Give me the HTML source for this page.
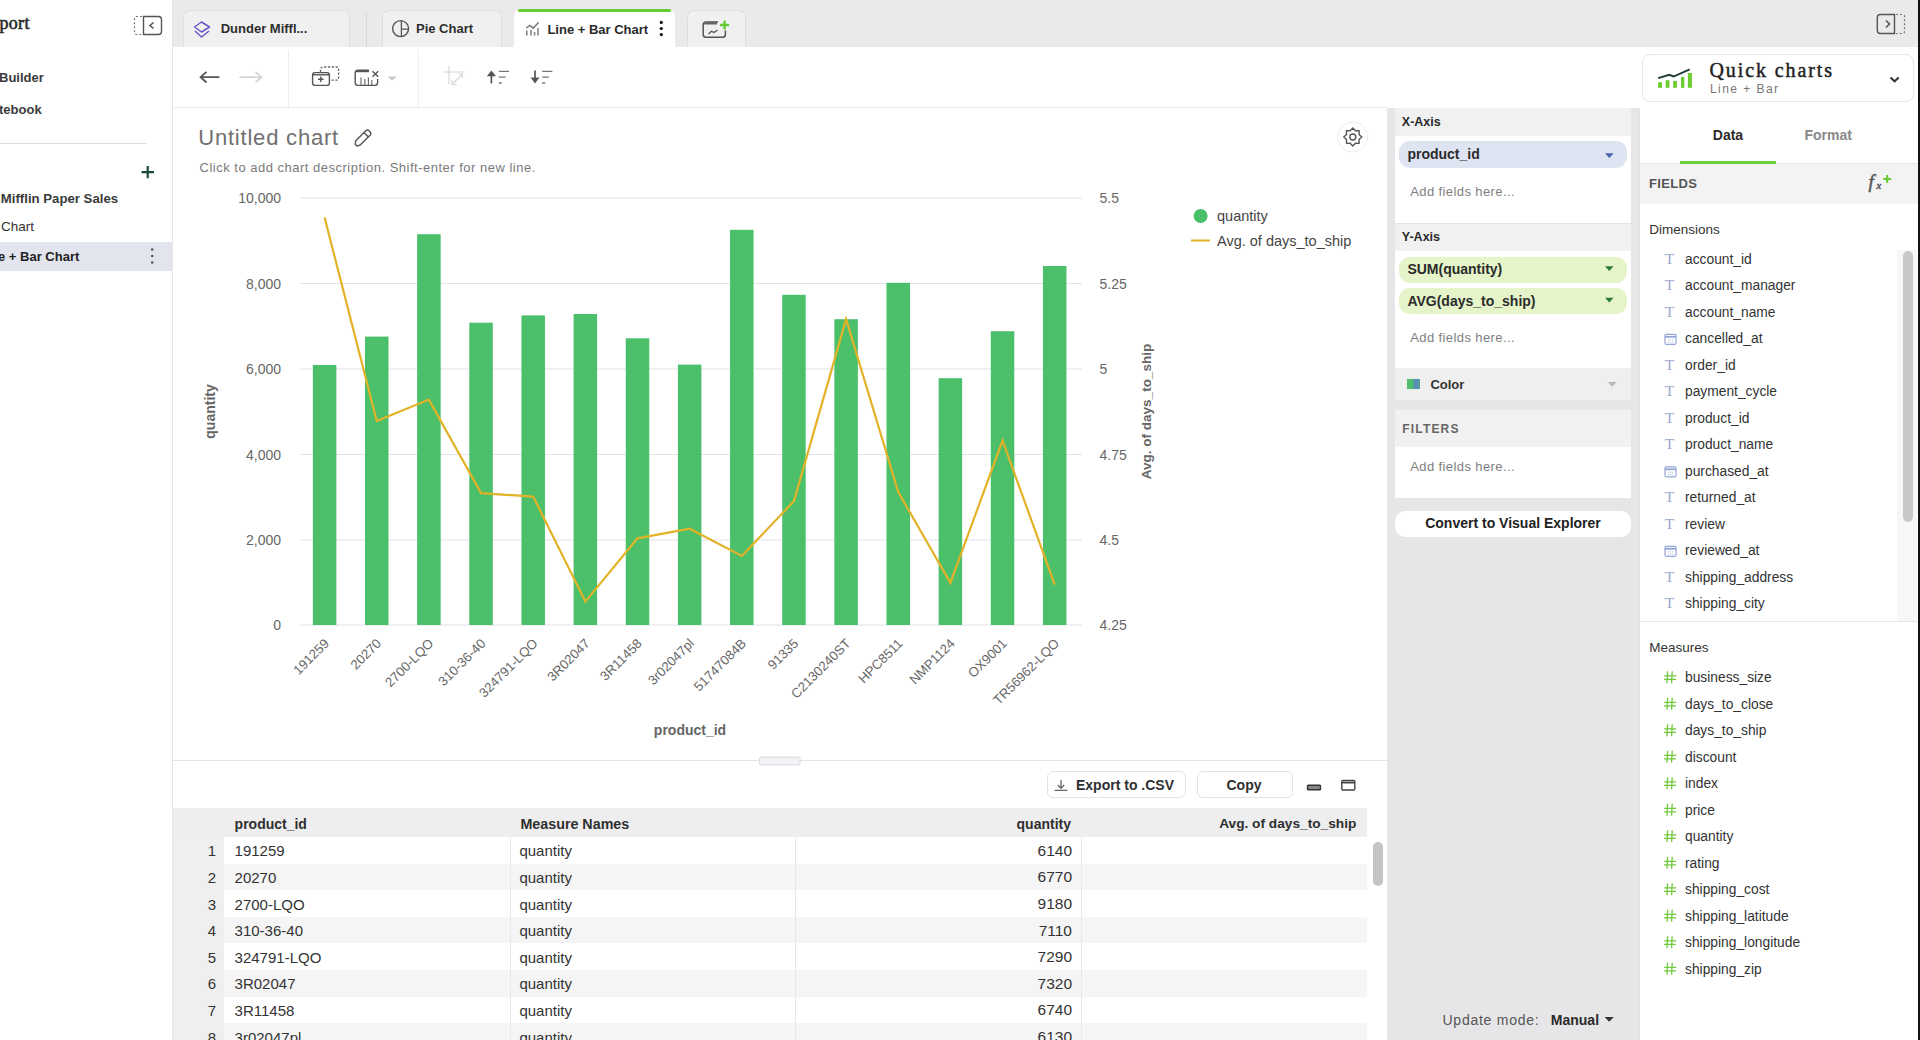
<!DOCTYPE html>
<html><head><meta charset="utf-8"><title>Line + Bar Chart</title>
<style>
html,body{margin:0;padding:0;}
body{width:1920px;height:1040px;overflow:hidden;position:relative;background:#ffffff;font-family:"Liberation Sans", sans-serif;}
.t{position:absolute;white-space:nowrap;}
.r{position:absolute;}
svg{position:absolute;left:0;top:0;}
</style></head><body>

<div class="r" style="left:172px;top:0px;width:1746px;height:47px;background:#eaeaea;"></div>
<div class="r" style="left:172px;top:0px;width:1px;height:1040px;background:#e4e4ea;"></div>
<div class="r" style="left:173px;top:107px;width:1214px;height:1px;background:#ececf0;"></div>
<div class="r" style="left:1387px;top:108px;width:252px;height:932px;background:#e6e6e8;"></div>
<div class="r" style="left:1639px;top:108px;width:1px;height:932px;background:#e2e2e2;"></div>
<div class="r" style="left:1918px;top:0px;width:2px;height:1040px;background:#111111;"></div>
<div class="t" style="top:14.06px;font-size:18px;line-height:18px;font-weight:400;color:#2a2a2a;font-family:'Liberation Serif', serif;letter-spacing:0.3px;left:-0.50px;-webkit-text-stroke:0.6px #2a2a2a;">port</div>
<div class="t" style="top:70.90px;font-size:13px;line-height:13px;font-weight:700;color:#3a3a3a;left:-1.00px;">Builder</div>
<div class="t" style="top:102.60px;font-size:13px;line-height:13px;font-weight:700;color:#3a3a3a;left:-1.00px;">tebook</div>
<div class="r" style="left:0px;top:143px;width:147px;height:1px;background:#dedede;"></div>
<div class="t" style="top:191.63px;font-size:13.2px;line-height:13.2px;font-weight:700;color:#3a3a3a;left:0.80px;">Mifflin Paper Sales</div>
<div class="t" style="top:220.27px;font-size:13.5px;line-height:13.5px;font-weight:400;color:#333;left:1.00px;">Chart</div>
<div class="r" style="left:0px;top:242px;width:172px;height:29px;background:#e2e5ee;"></div>
<div class="t" style="top:249.50px;font-size:13px;line-height:13px;font-weight:700;color:#1f1f1f;left:-2.00px;">e + Bar Chart</div>
<div class="r" style="left:183px;top:10px;width:167px;height:37px;background:#f0f0f0;border:1px solid #e0e0e0;border-bottom:none;border-radius:7px 7px 0 0;box-sizing:border-box;"></div>
<div class="t" style="top:22.10px;font-size:13px;line-height:13px;font-weight:700;color:#2e2e2e;left:220.70px;">Dunder Miffl...</div>
<div class="r" style="left:366px;top:12px;width:1px;height:35px;background:#d8d8d8;"></div>
<div class="r" style="left:382px;top:10px;width:120px;height:37px;background:#f0f0f0;border:1px solid #dedede;border-bottom:none;border-radius:7px 7px 0 0;box-sizing:border-box;"></div>
<div class="t" style="top:22.10px;font-size:13px;line-height:13px;font-weight:700;color:#2e2e2e;left:416.00px;">Pie Chart</div>
<div class="r" style="left:514px;top:9px;width:161px;height:38px;background:#ffffff;border-radius:8px 8px 0 0;"></div>
<div class="r" style="left:518px;top:9px;width:153px;height:3px;background:#66cc33;border-radius:3px;"></div>
<div class="t" style="top:22.60px;font-size:13px;line-height:13px;font-weight:700;color:#2b2b2b;left:547.40px;">Line + Bar Chart</div>
<div class="r" style="left:687px;top:10px;width:59px;height:37px;background:#f0f0f0;border:1px solid #dedede;border-bottom:none;border-radius:7px 7px 0 0;box-sizing:border-box;"></div>
<div class="t" style="top:126.88px;font-size:22px;line-height:22px;font-weight:400;color:#707070;letter-spacing:0.8px;left:198.20px;">Untitled chart</div>
<div class="t" style="top:160.60px;font-size:13px;line-height:13px;font-weight:400;color:#7a7a7a;letter-spacing:0.5px;left:199.50px;">Click to add chart description. Shift-enter for new line.</div>
<svg width="1920" height="1040" viewBox="0 0 1920 1040" style="font-family:'Liberation Sans', sans-serif">
<line x1="300" x2="1082" y1="198" y2="198" stroke="#e2e2ea" stroke-width="1"/>
<line x1="300" x2="1082" y1="283.5" y2="283.5" stroke="#e2e2ea" stroke-width="1"/>
<line x1="300" x2="1082" y1="369" y2="369" stroke="#e2e2ea" stroke-width="1"/>
<line x1="300" x2="1082" y1="454.5" y2="454.5" stroke="#e2e2ea" stroke-width="1"/>
<line x1="300" x2="1082" y1="540" y2="540" stroke="#e2e2ea" stroke-width="1"/>
<line x1="300" x2="1082" y1="625" y2="625" stroke="#e2e2ea" stroke-width="1"/>
<text x="281" y="203" text-anchor="end" font-size="14" fill="#666">10,000</text>
<text x="1099.5" y="203" font-size="14" fill="#666">5.5</text>
<text x="281" y="288.5" text-anchor="end" font-size="14" fill="#666">8,000</text>
<text x="1099.5" y="288.5" font-size="14" fill="#666">5.25</text>
<text x="281" y="374" text-anchor="end" font-size="14" fill="#666">6,000</text>
<text x="1099.5" y="374" font-size="14" fill="#666">5</text>
<text x="281" y="459.5" text-anchor="end" font-size="14" fill="#666">4,000</text>
<text x="1099.5" y="459.5" font-size="14" fill="#666">4.75</text>
<text x="281" y="545" text-anchor="end" font-size="14" fill="#666">2,000</text>
<text x="1099.5" y="545" font-size="14" fill="#666">4.5</text>
<text x="281" y="630" text-anchor="end" font-size="14" fill="#666">0</text>
<text x="1099.5" y="630" font-size="14" fill="#666">4.25</text>
<rect x="312.85" y="365" width="23.5" height="260.00" fill="#4cbf6b"/>
<rect x="365.00" y="336.6" width="23.5" height="288.40" fill="#4cbf6b"/>
<rect x="417.15" y="234.2" width="23.5" height="390.80" fill="#4cbf6b"/>
<rect x="469.30" y="322.7" width="23.5" height="302.30" fill="#4cbf6b"/>
<rect x="521.45" y="315.4" width="23.5" height="309.60" fill="#4cbf6b"/>
<rect x="573.60" y="314" width="23.5" height="311.00" fill="#4cbf6b"/>
<rect x="625.75" y="338.3" width="23.5" height="286.70" fill="#4cbf6b"/>
<rect x="677.90" y="364.6" width="23.5" height="260.40" fill="#4cbf6b"/>
<rect x="730.05" y="229.8" width="23.5" height="395.20" fill="#4cbf6b"/>
<rect x="782.20" y="294.8" width="23.5" height="330.20" fill="#4cbf6b"/>
<rect x="834.35" y="319.2" width="23.5" height="305.80" fill="#4cbf6b"/>
<rect x="886.50" y="282.8" width="23.5" height="342.20" fill="#4cbf6b"/>
<rect x="938.65" y="378.2" width="23.5" height="246.80" fill="#4cbf6b"/>
<rect x="990.80" y="331.2" width="23.5" height="293.80" fill="#4cbf6b"/>
<rect x="1042.95" y="266" width="23.5" height="359.00" fill="#4cbf6b"/>
<polyline points="324.60,217.5 376.75,421.1 428.90,399.6 481.05,493.1 533.20,496.6 585.35,601.6 637.50,538.3 689.65,528.7 741.80,556 793.95,501.1 846.10,319.2 898.25,492 950.40,582.9 1002.55,440.5 1054.70,584.6" fill="none" stroke="#e2b227" stroke-width="2.2" stroke-linejoin="miter"/>
<text transform="translate(326.60,641) rotate(-45)" text-anchor="end" font-size="13.2" fill="#666" dy="0.35em">191259</text>
<text transform="translate(378.75,641) rotate(-45)" text-anchor="end" font-size="13.2" fill="#666" dy="0.35em">20270</text>
<text transform="translate(430.90,641) rotate(-45)" text-anchor="end" font-size="13.2" fill="#666" dy="0.35em">2700-LQO</text>
<text transform="translate(483.05,641) rotate(-45)" text-anchor="end" font-size="13.2" fill="#666" dy="0.35em">310-36-40</text>
<text transform="translate(535.20,641) rotate(-45)" text-anchor="end" font-size="13.2" fill="#666" dy="0.35em">324791-LQO</text>
<text transform="translate(587.35,641) rotate(-45)" text-anchor="end" font-size="13.2" fill="#666" dy="0.35em">3R02047</text>
<text transform="translate(639.50,641) rotate(-45)" text-anchor="end" font-size="13.2" fill="#666" dy="0.35em">3R11458</text>
<text transform="translate(691.65,641) rotate(-45)" text-anchor="end" font-size="13.2" fill="#666" dy="0.35em">3r02047pl</text>
<text transform="translate(743.80,641) rotate(-45)" text-anchor="end" font-size="13.2" fill="#666" dy="0.35em">51747084B</text>
<text transform="translate(795.95,641) rotate(-45)" text-anchor="end" font-size="13.2" fill="#666" dy="0.35em">91335</text>
<text transform="translate(848.10,641) rotate(-45)" text-anchor="end" font-size="13.2" fill="#666" dy="0.35em">C2130240ST</text>
<text transform="translate(900.25,641) rotate(-45)" text-anchor="end" font-size="13.2" fill="#666" dy="0.35em">HPC8511</text>
<text transform="translate(952.40,641) rotate(-45)" text-anchor="end" font-size="13.2" fill="#666" dy="0.35em">NMP1124</text>
<text transform="translate(1004.55,641) rotate(-45)" text-anchor="end" font-size="13.2" fill="#666" dy="0.35em">OX9001</text>
<text transform="translate(1056.70,641) rotate(-45)" text-anchor="end" font-size="13.2" fill="#666" dy="0.35em">TR56962-LQO</text>
<text transform="translate(215,411.5) rotate(-90)" text-anchor="middle" font-size="14" font-weight="700" fill="#666">quantity</text>
<text transform="translate(1151,411.5) rotate(-90)" text-anchor="middle" font-size="13.5" font-weight="700" fill="#666">Avg. of days_to_ship</text>
<text x="690" y="735.4" text-anchor="middle" font-size="14" font-weight="700" fill="#666">product_id</text>
<circle cx="1200.6" cy="216" r="7" fill="#4cbf6b"/>
<text x="1217" y="221" font-size="14.5" fill="#444">quantity</text>
<line x1="1191" x2="1210" y1="240.5" y2="240.5" stroke="#e2b227" stroke-width="2"/>
<text x="1217" y="245.5" font-size="14.5" fill="#444">Avg. of days_to_ship</text>
</svg>
<div class="r" style="left:173px;top:760px;width:1214px;height:1px;background:#e2e2ea;"></div>
<div class="r" style="left:1047px;top:771px;width:139px;height:27px;background:#ffffff;border:1px solid #e3e3e3;border-radius:6px;box-sizing:border-box;"></div>
<div class="t" style="top:778.45px;font-size:14px;line-height:14px;font-weight:700;color:#2f2f2f;left:1076.00px;">Export to .CSV</div>
<div class="r" style="left:1197px;top:771px;width:96px;height:27px;background:#ffffff;border:1px solid #e3e3e3;border-radius:6px;box-sizing:border-box;"></div>
<div class="t" style="top:778.45px;font-size:14px;line-height:14px;font-weight:700;color:#2f2f2f;left:1226.50px;">Copy</div>
<div class="r" style="left:173px;top:808px;width:1194px;height:29px;background:#eeeeef;"></div>
<div class="r" style="left:173px;top:837px;width:51px;height:203px;background:#efeff0;"></div>
<div class="r" style="left:224px;top:837.0px;width:1143px;height:26.7px;background:#ffffff;"></div>
<div class="r" style="left:224px;top:863.6px;width:1143px;height:26.7px;background:#f5f5f6;"></div>
<div class="r" style="left:224px;top:890.2px;width:1143px;height:26.7px;background:#ffffff;"></div>
<div class="r" style="left:224px;top:916.8px;width:1143px;height:26.7px;background:#f5f5f6;"></div>
<div class="r" style="left:224px;top:943.4px;width:1143px;height:26.7px;background:#ffffff;"></div>
<div class="r" style="left:224px;top:970.0px;width:1143px;height:26.7px;background:#f5f5f6;"></div>
<div class="r" style="left:224px;top:996.6px;width:1143px;height:26.7px;background:#ffffff;"></div>
<div class="r" style="left:224px;top:1023.2px;width:1143px;height:26.7px;background:#f5f5f6;"></div>
<div class="r" style="left:510px;top:837px;width:1px;height:203px;background:#e8e8e8;"></div>
<div class="r" style="left:795px;top:837px;width:1px;height:203px;background:#e8e8e8;"></div>
<div class="r" style="left:1081px;top:837px;width:1px;height:203px;background:#e8e8e8;"></div>
<div class="t" style="top:816.95px;font-size:14px;line-height:14px;font-weight:700;color:#2f2f2f;left:234.60px;">product_id</div>
<div class="t" style="top:816.70px;font-size:14.3px;line-height:14.3px;font-weight:700;color:#2f2f2f;left:520.40px;">Measure Names</div>
<div class="t" style="top:816.95px;font-size:14px;line-height:14px;font-weight:700;color:#2f2f2f;right:849.00px;">quantity</div>
<div class="t" style="top:817.20px;font-size:13.7px;line-height:13.7px;font-weight:700;color:#2f2f2f;right:563.70px;">Avg. of days_to_ship</div>
<div class="t" style="top:843.30px;font-size:15px;line-height:15px;font-weight:400;color:#333;right:1704.00px;">1</div>
<div class="t" style="top:843.30px;font-size:15px;line-height:15px;font-weight:400;color:#333;left:234.60px;">191259</div>
<div class="t" style="top:843.30px;font-size:15px;line-height:15px;font-weight:400;color:#333;left:519.40px;">quantity</div>
<div class="t" style="top:842.88px;font-size:15.5px;line-height:15.5px;font-weight:400;color:#333;right:848.00px;">6140</div>
<div class="t" style="top:869.90px;font-size:15px;line-height:15px;font-weight:400;color:#333;right:1704.00px;">2</div>
<div class="t" style="top:869.90px;font-size:15px;line-height:15px;font-weight:400;color:#333;left:234.60px;">20270</div>
<div class="t" style="top:869.90px;font-size:15px;line-height:15px;font-weight:400;color:#333;left:519.40px;">quantity</div>
<div class="t" style="top:869.48px;font-size:15.5px;line-height:15.5px;font-weight:400;color:#333;right:848.00px;">6770</div>
<div class="t" style="top:896.50px;font-size:15px;line-height:15px;font-weight:400;color:#333;right:1704.00px;">3</div>
<div class="t" style="top:896.50px;font-size:15px;line-height:15px;font-weight:400;color:#333;left:234.60px;">2700-LQO</div>
<div class="t" style="top:896.50px;font-size:15px;line-height:15px;font-weight:400;color:#333;left:519.40px;">quantity</div>
<div class="t" style="top:896.08px;font-size:15.5px;line-height:15.5px;font-weight:400;color:#333;right:848.00px;">9180</div>
<div class="t" style="top:923.10px;font-size:15px;line-height:15px;font-weight:400;color:#333;right:1704.00px;">4</div>
<div class="t" style="top:923.10px;font-size:15px;line-height:15px;font-weight:400;color:#333;left:234.60px;">310-36-40</div>
<div class="t" style="top:923.10px;font-size:15px;line-height:15px;font-weight:400;color:#333;left:519.40px;">quantity</div>
<div class="t" style="top:922.68px;font-size:15.5px;line-height:15.5px;font-weight:400;color:#333;right:848.00px;">7110</div>
<div class="t" style="top:949.70px;font-size:15px;line-height:15px;font-weight:400;color:#333;right:1704.00px;">5</div>
<div class="t" style="top:949.70px;font-size:15px;line-height:15px;font-weight:400;color:#333;left:234.60px;">324791-LQO</div>
<div class="t" style="top:949.70px;font-size:15px;line-height:15px;font-weight:400;color:#333;left:519.40px;">quantity</div>
<div class="t" style="top:949.28px;font-size:15.5px;line-height:15.5px;font-weight:400;color:#333;right:848.00px;">7290</div>
<div class="t" style="top:976.30px;font-size:15px;line-height:15px;font-weight:400;color:#333;right:1704.00px;">6</div>
<div class="t" style="top:976.30px;font-size:15px;line-height:15px;font-weight:400;color:#333;left:234.60px;">3R02047</div>
<div class="t" style="top:976.30px;font-size:15px;line-height:15px;font-weight:400;color:#333;left:519.40px;">quantity</div>
<div class="t" style="top:975.88px;font-size:15.5px;line-height:15.5px;font-weight:400;color:#333;right:848.00px;">7320</div>
<div class="t" style="top:1002.90px;font-size:15px;line-height:15px;font-weight:400;color:#333;right:1704.00px;">7</div>
<div class="t" style="top:1002.90px;font-size:15px;line-height:15px;font-weight:400;color:#333;left:234.60px;">3R11458</div>
<div class="t" style="top:1002.90px;font-size:15px;line-height:15px;font-weight:400;color:#333;left:519.40px;">quantity</div>
<div class="t" style="top:1002.48px;font-size:15.5px;line-height:15.5px;font-weight:400;color:#333;right:848.00px;">6740</div>
<div class="t" style="top:1029.50px;font-size:15px;line-height:15px;font-weight:400;color:#333;right:1704.00px;">8</div>
<div class="t" style="top:1029.50px;font-size:15px;line-height:15px;font-weight:400;color:#333;left:234.60px;">3r02047pl</div>
<div class="t" style="top:1029.50px;font-size:15px;line-height:15px;font-weight:400;color:#333;left:519.40px;">quantity</div>
<div class="t" style="top:1029.08px;font-size:15.5px;line-height:15.5px;font-weight:400;color:#333;right:848.00px;">6130</div>
<div class="r" style="left:1373px;top:842px;width:10px;height:44px;background:#c4c4c4;border-radius:5px;"></div>
<div class="r" style="left:1395px;top:108px;width:236px;height:116px;background:#ffffff;"></div>
<div class="r" style="left:1395px;top:108px;width:236px;height:28px;background:#f1f1f1;"></div>
<div class="t" style="top:116.12px;font-size:12.5px;line-height:12.5px;font-weight:700;color:#2b2b2b;left:1401.80px;">X-Axis</div>
<div class="r" style="left:1399px;top:141px;width:228px;height:27px;background:#dfe4f2;border-radius:11px;"></div>
<div class="t" style="top:147.15px;font-size:14px;line-height:14px;font-weight:700;color:#2b2b2b;left:1407.40px;">product_id</div>
<div class="t" style="top:184.60px;font-size:13px;line-height:13px;font-weight:400;color:#7e7e7e;letter-spacing:0.4px;left:1410.20px;">Add fields here...</div>
<div class="r" style="left:1395px;top:223px;width:236px;height:1px;background:#e4e4e4;"></div>
<div class="r" style="left:1395px;top:224px;width:236px;height:27px;background:#f1f1f1;"></div>
<div class="r" style="left:1395px;top:251px;width:236px;height:117px;background:#ffffff;"></div>
<div class="t" style="top:230.92px;font-size:12.5px;line-height:12.5px;font-weight:700;color:#2b2b2b;left:1401.80px;">Y-Axis</div>
<div class="r" style="left:1399px;top:256.5px;width:228px;height:26px;background:#e5f4c9;border-radius:11px;"></div>
<div class="t" style="top:262.35px;font-size:14px;line-height:14px;font-weight:700;color:#2b2b2b;left:1407.40px;">SUM(quantity)</div>
<div class="r" style="left:1399px;top:287.5px;width:228px;height:26.5px;background:#e5f4c9;border-radius:11px;"></div>
<div class="t" style="top:293.65px;font-size:14px;line-height:14px;font-weight:700;color:#2b2b2b;left:1407.40px;">AVG(days_to_ship)</div>
<div class="t" style="top:331.00px;font-size:13px;line-height:13px;font-weight:400;color:#7e7e7e;letter-spacing:0.4px;left:1410.20px;">Add fields here...</div>
<div class="r" style="left:1395px;top:368px;width:236px;height:32px;background:#efefef;"></div>
<div class="r" style="left:1407px;top:379px;width:12.5px;height:10px;background:#4cbf6b;"></div>
<div class="t" style="top:378.20px;font-size:13px;line-height:13px;font-weight:700;color:#333;left:1430.40px;">Color</div>
<div class="r" style="left:1395px;top:410px;width:236px;height:88px;background:#ffffff;"></div>
<div class="r" style="left:1395px;top:410px;width:236px;height:37px;background:#f1f1f1;"></div>
<div class="t" style="top:422.94px;font-size:12px;line-height:12px;font-weight:700;color:#666;letter-spacing:1.2px;left:1402.20px;">FILTERS</div>
<div class="t" style="top:459.90px;font-size:13px;line-height:13px;font-weight:400;color:#7e7e7e;letter-spacing:0.4px;left:1410.20px;">Add fields here...</div>
<div class="r" style="left:1395px;top:511px;width:236px;height:26px;background:#ffffff;border-radius:10px;"></div>
<div class="t" style="top:516.45px;font-size:14px;line-height:14px;font-weight:700;color:#222;left:1213.00px;width:600px;text-align:center;">Convert to Visual Explorer</div>
<div class="t" style="top:1012.75px;font-size:14px;line-height:14px;font-weight:400;color:#555;letter-spacing:0.75px;left:1442.50px;">Update mode:</div>
<div class="t" style="top:1012.75px;font-size:14px;line-height:14px;font-weight:700;color:#2b2b2b;left:1550.80px;">Manual</div>
<div class="r" style="left:1642px;top:54px;width:272px;height:48px;background:#ffffff;border:1px solid #e6e6e6;border-radius:8px;box-sizing:border-box;"></div>
<div class="t" style="top:60.37px;font-size:20px;line-height:20px;font-weight:400;color:#222;font-family:'Liberation Serif', serif;letter-spacing:1.9px;left:1709.50px;-webkit-text-stroke:0.45px #222;">Quick charts</div>
<div class="t" style="top:82.94px;font-size:12px;line-height:12px;font-weight:400;color:#777;letter-spacing:1.45px;left:1710.00px;">Line + Bar</div>
<div class="t" style="top:127.85px;font-size:14px;line-height:14px;font-weight:700;color:#2b2b2b;left:1712.80px;">Data</div>
<div class="t" style="top:127.85px;font-size:14px;line-height:14px;font-weight:700;color:#888;left:1804.40px;">Format</div>
<div class="r" style="left:1640px;top:163px;width:278px;height:1px;background:#e8e8e8;"></div>
<div class="r" style="left:1680px;top:161px;width:96px;height:3px;background:#6fd03f;"></div>
<div class="r" style="left:1640px;top:164px;width:278px;height:40px;background:#f3f3f3;"></div>
<div class="t" style="top:177.00px;font-size:13px;line-height:13px;font-weight:700;color:#555;letter-spacing:0.35px;left:1649.00px;">FIELDS</div>
<div class="t" style="top:223.07px;font-size:13.5px;line-height:13.5px;font-weight:400;color:#333;left:1649.20px;">Dimensions</div>
<div class="t" style="top:252.62px;font-size:13.8px;line-height:13.8px;font-weight:400;color:#333;left:1685.00px;">account_id</div>
<div class="t" style="top:279.12px;font-size:13.8px;line-height:13.8px;font-weight:400;color:#333;left:1685.00px;">account_manager</div>
<div class="t" style="top:305.62px;font-size:13.8px;line-height:13.8px;font-weight:400;color:#333;left:1685.00px;">account_name</div>
<div class="t" style="top:332.12px;font-size:13.8px;line-height:13.8px;font-weight:400;color:#333;left:1685.00px;">cancelled_at</div>
<div class="t" style="top:358.62px;font-size:13.8px;line-height:13.8px;font-weight:400;color:#333;left:1685.00px;">order_id</div>
<div class="t" style="top:385.12px;font-size:13.8px;line-height:13.8px;font-weight:400;color:#333;left:1685.00px;">payment_cycle</div>
<div class="t" style="top:411.62px;font-size:13.8px;line-height:13.8px;font-weight:400;color:#333;left:1685.00px;">product_id</div>
<div class="t" style="top:438.12px;font-size:13.8px;line-height:13.8px;font-weight:400;color:#333;left:1685.00px;">product_name</div>
<div class="t" style="top:464.62px;font-size:13.8px;line-height:13.8px;font-weight:400;color:#333;left:1685.00px;">purchased_at</div>
<div class="t" style="top:491.12px;font-size:13.8px;line-height:13.8px;font-weight:400;color:#333;left:1685.00px;">returned_at</div>
<div class="t" style="top:517.62px;font-size:13.8px;line-height:13.8px;font-weight:400;color:#333;left:1685.00px;">review</div>
<div class="t" style="top:544.12px;font-size:13.8px;line-height:13.8px;font-weight:400;color:#333;left:1685.00px;">reviewed_at</div>
<div class="t" style="top:570.62px;font-size:13.8px;line-height:13.8px;font-weight:400;color:#333;left:1685.00px;">shipping_address</div>
<div class="t" style="top:597.12px;font-size:13.8px;line-height:13.8px;font-weight:400;color:#333;left:1685.00px;">shipping_city</div>
<div class="r" style="left:1897px;top:250px;width:20px;height:371px;background:#f7f7f7;"></div>
<div class="r" style="left:1903px;top:251px;width:10px;height:271px;background:#c8c8c8;border-radius:5px;"></div>
<div class="r" style="left:1640px;top:621px;width:278px;height:1px;background:#e6e6e6;"></div>
<div class="t" style="top:641.47px;font-size:13.5px;line-height:13.5px;font-weight:400;color:#333;left:1649.20px;">Measures</div>
<div class="t" style="top:671.02px;font-size:13.8px;line-height:13.8px;font-weight:400;color:#333;left:1685.00px;">business_size</div>
<div class="t" style="top:697.52px;font-size:13.8px;line-height:13.8px;font-weight:400;color:#333;left:1685.00px;">days_to_close</div>
<div class="t" style="top:724.02px;font-size:13.8px;line-height:13.8px;font-weight:400;color:#333;left:1685.00px;">days_to_ship</div>
<div class="t" style="top:750.52px;font-size:13.8px;line-height:13.8px;font-weight:400;color:#333;left:1685.00px;">discount</div>
<div class="t" style="top:777.02px;font-size:13.8px;line-height:13.8px;font-weight:400;color:#333;left:1685.00px;">index</div>
<div class="t" style="top:803.52px;font-size:13.8px;line-height:13.8px;font-weight:400;color:#333;left:1685.00px;">price</div>
<div class="t" style="top:830.02px;font-size:13.8px;line-height:13.8px;font-weight:400;color:#333;left:1685.00px;">quantity</div>
<div class="t" style="top:856.52px;font-size:13.8px;line-height:13.8px;font-weight:400;color:#333;left:1685.00px;">rating</div>
<div class="t" style="top:883.02px;font-size:13.8px;line-height:13.8px;font-weight:400;color:#333;left:1685.00px;">shipping_cost</div>
<div class="t" style="top:909.52px;font-size:13.8px;line-height:13.8px;font-weight:400;color:#333;left:1685.00px;">shipping_latitude</div>
<div class="t" style="top:936.02px;font-size:13.8px;line-height:13.8px;font-weight:400;color:#333;left:1685.00px;">shipping_longitude</div>
<div class="t" style="top:962.52px;font-size:13.8px;line-height:13.8px;font-weight:400;color:#333;left:1685.00px;">shipping_zip</div>
<svg width="1920" height="1040" viewBox="0 0 1920 1040" style="font-family:'Liberation Sans', sans-serif">
<path d="M143.5 16.5 H158.5 Q161.5 16.5 161.5 19.5 V31.5 Q161.5 34.5 158.5 34.5 H143.5 Z" fill="none" stroke="#555" stroke-width="1.4"/>
<path d="M142 16.5 H136.5 Q134.5 16.5 134.5 18.5 V32.5 Q134.5 34.5 136.5 34.5 H142" fill="none" stroke="#777" stroke-width="1.2" stroke-dasharray="2 2"/>
<path d="M153.5 22.5 L150 25.5 L153.5 28.5" fill="none" stroke="#555" stroke-width="1.6"/>
<path d="M147.7 166 V178.3 M141.5 172.2 H154" stroke="#1f4a37" stroke-width="2.2"/>
<circle cx="152.2" cy="249.5" r="1.3" fill="#555"/>
<circle cx="152.2" cy="256" r="1.3" fill="#555"/>
<circle cx="152.2" cy="262.5" r="1.3" fill="#555"/>
<path d="M1894.5 14.5 H1880.3 Q1877.3 14.5 1877.3 17.5 V30.5 Q1877.3 33.5 1880.3 33.5 H1894.5 Z" fill="none" stroke="#555" stroke-width="1.4"/>
<path d="M1896 14.5 H1902.5 Q1904.5 14.5 1904.5 16.5 V31.5 Q1904.5 33.5 1902.5 33.5 H1896" fill="none" stroke="#777" stroke-width="1.2" stroke-dasharray="2 2"/>
<path d="M1886 20.5 L1889.5 24 L1886 27.5" fill="none" stroke="#555" stroke-width="1.6"/>
<path d="M194.5 27 L201.5 22 L209.5 27 L201.5 32 Z" fill="none" stroke="#6b55c9" stroke-width="1.5" stroke-linejoin="round"/>
<path d="M195 31 L201.5 37 L209 31" fill="none" stroke="#6b55c9" stroke-width="1.5" stroke-linejoin="round"/>
<circle cx="400.6" cy="28.6" r="8" fill="none" stroke="#555" stroke-width="1.4"/>
<path d="M401.4 20.6 V36.6 M401.4 29.2 H408.6" stroke="#555" stroke-width="1.3"/>
<path d="M526.2 28 L529.9 25.5 L533.2 28.2 L538.5 22.5" fill="none" stroke="#777" stroke-width="1.5"/>
<path d="M526.8 30.5 V35.5 M531 30 V35.5 M534.6 32 V35.5 M538 28 V35.5" stroke="#888" stroke-width="1.6"/>
<circle cx="661.3" cy="22.4" r="1.6" fill="#111"/>
<circle cx="661.3" cy="28.5" r="1.6" fill="#111"/>
<circle cx="661.3" cy="34.6" r="1.6" fill="#111"/>
<path d="M718 22 H706 Q703.2 22 703.2 25 V34.5 Q703.2 37.3 706 37.3 H722.5 Q725.4 37.3 725.4 34.5 V30.5" fill="none" stroke="#555" stroke-width="1.5"/>
<path d="M704 23.2 H717" stroke="#666" stroke-width="2.6"/>
<path d="M708.5 34 L711.5 31.2 L714 32.5 L717.5 30" fill="none" stroke="#555" stroke-width="1.3"/>
<path d="M724.6 20.5 V29.5 M720.1 25 H729.1" stroke="#66cc33" stroke-width="2.4"/>
<path d="M219.4 77.2 H201 M206.5 71.9 L200.6 77.2 L206.5 82.5" fill="none" stroke="#555" stroke-width="1.8"/>
<path d="M239.4 77.2 H261 M255.5 71.9 L261.4 77.2 L255.5 82.5" fill="none" stroke="#cfcfcf" stroke-width="1.6"/>
<line x1="288.5" y1="50" x2="288.5" y2="107" stroke="#ededf1" stroke-width="1"/>
<line x1="418.3" y1="50" x2="418.3" y2="107" stroke="#ededf1" stroke-width="1"/>
<path d="M320.5 72 V69.5 Q320.5 67 323 67 H336 Q338.6 67 338.6 69.5 V77.6 Q338.6 80.2 336 80.2 H329.8" fill="none" stroke="#666" stroke-width="1.3" stroke-dasharray="2.2 1.6"/>
<rect x="312.6" y="72.6" width="16.8" height="12.8" rx="2.4" fill="#fff" stroke="#555" stroke-width="1.4"/>
<path d="M312.8 74.8 H329.2" stroke="#555" stroke-width="1.4"/>
<path d="M320.8 76.5 V82.1 M318 79.3 H323.6" stroke="#555" stroke-width="1.4"/>
<path d="M369 70.2 H358 Q355.2 70.2 355.2 73 V82.6 Q355.2 85.4 358 85.4 H375 Q377.6 85.4 377.6 82.6 V79" fill="none" stroke="#555" stroke-width="1.4"/>
<path d="M356 71.2 H369" stroke="#555" stroke-width="2"/>
<path d="M361 77.5 V85 M364.8 79 V85 M368.4 77.5 V85 M371.8 80 V85" stroke="#666" stroke-width="1.1"/>
<path d="M372.5 71.2 L378.2 76.8 M378.2 71.2 L372.5 76.8" stroke="#555" stroke-width="1.4"/>
<path d="M387.7 76.5 L392.2 80.8 L396.6 76.5 Z" fill="#c9c9c9"/>
<path d="M449 66 V84 M443 72 H465 M452 84.5 L462.5 74 M452 80 V84.5 H456.5 M458.5 74 H462.5 V78" fill="none" stroke="#d6d6da" stroke-width="1.1"/>
<path d="M491.4 83.5 V75" fill="none" stroke="#555" stroke-width="1.7"/><path d="M486.8 76.3 L491.4 70.4 L496 76.3 Z" fill="#555"/>
<path d="M498.8 71.4 H509 M498.8 77.2 H505.5 M498.8 83 H501.8" stroke="#777" stroke-width="1.3"/>
<path d="M535 70.5 V79" fill="none" stroke="#555" stroke-width="1.7"/><path d="M530.6 77.6 L535 83.4 L539.4 77.6 Z" fill="#555"/>
<path d="M542.2 71.4 H552.4 M542.2 77.2 H548.9 M542.2 83 H545.2" stroke="#777" stroke-width="1.3"/>
<path d="M357 146 L355.2 144.2 L355.8 140.8 L366 130.6 Q367.4 129.3 368.8 130.6 L370.3 132.1 Q371.6 133.5 370.3 134.9 L360.2 145 Z M364 132.6 L368.4 137" fill="none" stroke="#555" stroke-width="1.4" stroke-linejoin="round"/>
<path d="M1352.80 128.00 L1355.40 130.72 L1359.16 130.64 L1359.08 134.40 L1361.80 137.00 L1359.08 139.60 L1359.16 143.36 L1355.40 143.28 L1352.80 146.00 L1350.20 143.28 L1346.44 143.36 L1346.52 139.60 L1343.80 137.00 L1346.52 134.40 L1346.44 130.64 L1350.20 130.72 Z" fill="none" stroke="#555" stroke-width="1.4" stroke-linejoin="round"/>
<circle cx="1352.8" cy="137" r="3" fill="none" stroke="#555" stroke-width="1.4"/>
<circle cx="1352.8" cy="137" r="15" fill="none" stroke="#eeeef3" stroke-width="1"/>
<rect x="759.5" y="757.2" width="40.5" height="7.6" rx="1.2" fill="#f3f3f6" stroke="#d8d8e2" stroke-width="1"/>
<path d="M1061 780 V788 M1057.8 785 L1061 788.3 L1064.2 785 M1054.6 790.3 H1067.4" fill="none" stroke="#666" stroke-width="1.3"/>
<rect x="1307.5" y="785.2" width="13" height="4.6" rx="0.8" fill="#888" stroke="#333" stroke-width="1.4"/>
<rect x="1341.8" y="780.5" width="13" height="9.5" rx="1" fill="none" stroke="#444" stroke-width="1.4"/>
<path d="M1341.8 782.6 H1354.8" stroke="#444" stroke-width="1.8"/>
<path d="M1605 153.2 L1609.3 158 L1613.6 153.2 Z" fill="#4963ad"/>
<path d="M1605 266.2 L1609.3 271 L1613.6 266.2 Z" fill="#2b7a3a"/>
<path d="M1605 297.7 L1609.3 302.5 L1613.6 297.7 Z" fill="#2b7a3a"/>
<path d="M1607.8 382 L1612.2 386.8 L1616.6 382 Z" fill="#b8b8b8"/>
<rect x="1407" y="379" width="12.5" height="10" fill="#4cbf6b"/>
<rect x="1413.5" y="379" width="6" height="10" fill="#5a8fb8"/>
<path d="M1604.6 1017 L1609.2 1021.8 L1613.8 1017 Z" fill="#333"/>
<path d="M1658.2 78.2 L1669.2 74.8 L1673.6 76.5 L1689.7 69.4" fill="none" stroke="#1e3b2e" stroke-width="1.9"/>
<rect x="1658.2" y="82.2" width="3.8" height="5.6" fill="#6bcd2d"/>
<rect x="1665.7" y="80.2" width="3.7" height="7.6" fill="#6bcd2d"/>
<rect x="1673.2" y="80.9" width="3.7" height="6.9" fill="#6bcd2d"/>
<rect x="1681" y="77" width="3.3" height="10.8" fill="#6bcd2d"/>
<rect x="1687.9" y="73" width="4.0" height="14.8" fill="#6bcd2d"/>
<path d="M1890.5 77.5 L1894.6 81.3 L1898.7 77.5" fill="none" stroke="#333" stroke-width="2"/>
<text x="1868.5" y="188" font-family="Liberation Serif" font-style="italic" font-size="19" fill="#555" stroke="#555" stroke-width="0.5">f</text>
<text x="1876.6" y="189" font-family="Liberation Serif" font-style="italic" font-size="10.5" fill="#555" stroke="#555" stroke-width="0.4">x</text>
<path d="M1887.2 175 V183 M1883.2 179 H1891.2" stroke="#66cc33" stroke-width="2"/>
<text x="1664.8" y="263.8" font-family="Liberation Serif" font-size="15.5" fill="#9aa9cf">T</text>
<text x="1664.8" y="290.3" font-family="Liberation Serif" font-size="15.5" fill="#9aa9cf">T</text>
<text x="1664.8" y="316.8" font-family="Liberation Serif" font-size="15.5" fill="#9aa9cf">T</text>
<rect x="1665" y="334.3" width="11" height="10" rx="1.2" fill="none" stroke="#93a5d6" stroke-width="1.2"/>
<path d="M1665 336.8 H1676" stroke="#93a5d6" stroke-width="1.8"/>
<path d="M1668 339.8 H1673.5 M1668 342.1 H1673.5" stroke="#b5c2e4" stroke-width="1" stroke-dasharray="1.2 0.8"/>
<text x="1664.8" y="369.8" font-family="Liberation Serif" font-size="15.5" fill="#9aa9cf">T</text>
<text x="1664.8" y="396.3" font-family="Liberation Serif" font-size="15.5" fill="#9aa9cf">T</text>
<text x="1664.8" y="422.8" font-family="Liberation Serif" font-size="15.5" fill="#9aa9cf">T</text>
<text x="1664.8" y="449.3" font-family="Liberation Serif" font-size="15.5" fill="#9aa9cf">T</text>
<rect x="1665" y="466.8" width="11" height="10" rx="1.2" fill="none" stroke="#93a5d6" stroke-width="1.2"/>
<path d="M1665 469.3 H1676" stroke="#93a5d6" stroke-width="1.8"/>
<path d="M1668 472.3 H1673.5 M1668 474.6 H1673.5" stroke="#b5c2e4" stroke-width="1" stroke-dasharray="1.2 0.8"/>
<text x="1664.8" y="502.3" font-family="Liberation Serif" font-size="15.5" fill="#9aa9cf">T</text>
<text x="1664.8" y="528.8" font-family="Liberation Serif" font-size="15.5" fill="#9aa9cf">T</text>
<rect x="1665" y="546.3" width="11" height="10" rx="1.2" fill="none" stroke="#93a5d6" stroke-width="1.2"/>
<path d="M1665 548.8 H1676" stroke="#93a5d6" stroke-width="1.8"/>
<path d="M1668 551.8 H1673.5 M1668 554.1 H1673.5" stroke="#b5c2e4" stroke-width="1" stroke-dasharray="1.2 0.8"/>
<text x="1664.8" y="581.8" font-family="Liberation Serif" font-size="15.5" fill="#9aa9cf">T</text>
<text x="1664.8" y="608.3" font-family="Liberation Serif" font-size="15.5" fill="#9aa9cf">T</text>
<path d="M1667.6 671.2 L1667 683.2 M1672.2 671.2 L1671.6 683.2 M1664.2 675.9 H1676.2 M1664 679.4 H1676" stroke="#72c83c" stroke-width="1.3"/>
<path d="M1667.6 697.7 L1667 709.7 M1672.2 697.7 L1671.6 709.7 M1664.2 702.4 H1676.2 M1664 705.9 H1676" stroke="#72c83c" stroke-width="1.3"/>
<path d="M1667.6 724.2 L1667 736.2 M1672.2 724.2 L1671.6 736.2 M1664.2 728.9 H1676.2 M1664 732.4 H1676" stroke="#72c83c" stroke-width="1.3"/>
<path d="M1667.6 750.7 L1667 762.7 M1672.2 750.7 L1671.6 762.7 M1664.2 755.4 H1676.2 M1664 758.9 H1676" stroke="#72c83c" stroke-width="1.3"/>
<path d="M1667.6 777.2 L1667 789.2 M1672.2 777.2 L1671.6 789.2 M1664.2 781.9 H1676.2 M1664 785.4 H1676" stroke="#72c83c" stroke-width="1.3"/>
<path d="M1667.6 803.7 L1667 815.7 M1672.2 803.7 L1671.6 815.7 M1664.2 808.4 H1676.2 M1664 811.9 H1676" stroke="#72c83c" stroke-width="1.3"/>
<path d="M1667.6 830.2 L1667 842.2 M1672.2 830.2 L1671.6 842.2 M1664.2 834.9 H1676.2 M1664 838.4 H1676" stroke="#72c83c" stroke-width="1.3"/>
<path d="M1667.6 856.7 L1667 868.7 M1672.2 856.7 L1671.6 868.7 M1664.2 861.4 H1676.2 M1664 864.9 H1676" stroke="#72c83c" stroke-width="1.3"/>
<path d="M1667.6 883.2 L1667 895.2 M1672.2 883.2 L1671.6 895.2 M1664.2 887.9 H1676.2 M1664 891.4 H1676" stroke="#72c83c" stroke-width="1.3"/>
<path d="M1667.6 909.7 L1667 921.7 M1672.2 909.7 L1671.6 921.7 M1664.2 914.4 H1676.2 M1664 917.9 H1676" stroke="#72c83c" stroke-width="1.3"/>
<path d="M1667.6 936.2 L1667 948.2 M1672.2 936.2 L1671.6 948.2 M1664.2 940.9 H1676.2 M1664 944.4 H1676" stroke="#72c83c" stroke-width="1.3"/>
<path d="M1667.6 962.7 L1667 974.7 M1672.2 962.7 L1671.6 974.7 M1664.2 967.4 H1676.2 M1664 970.9 H1676" stroke="#72c83c" stroke-width="1.3"/>
</svg>
</body></html>
